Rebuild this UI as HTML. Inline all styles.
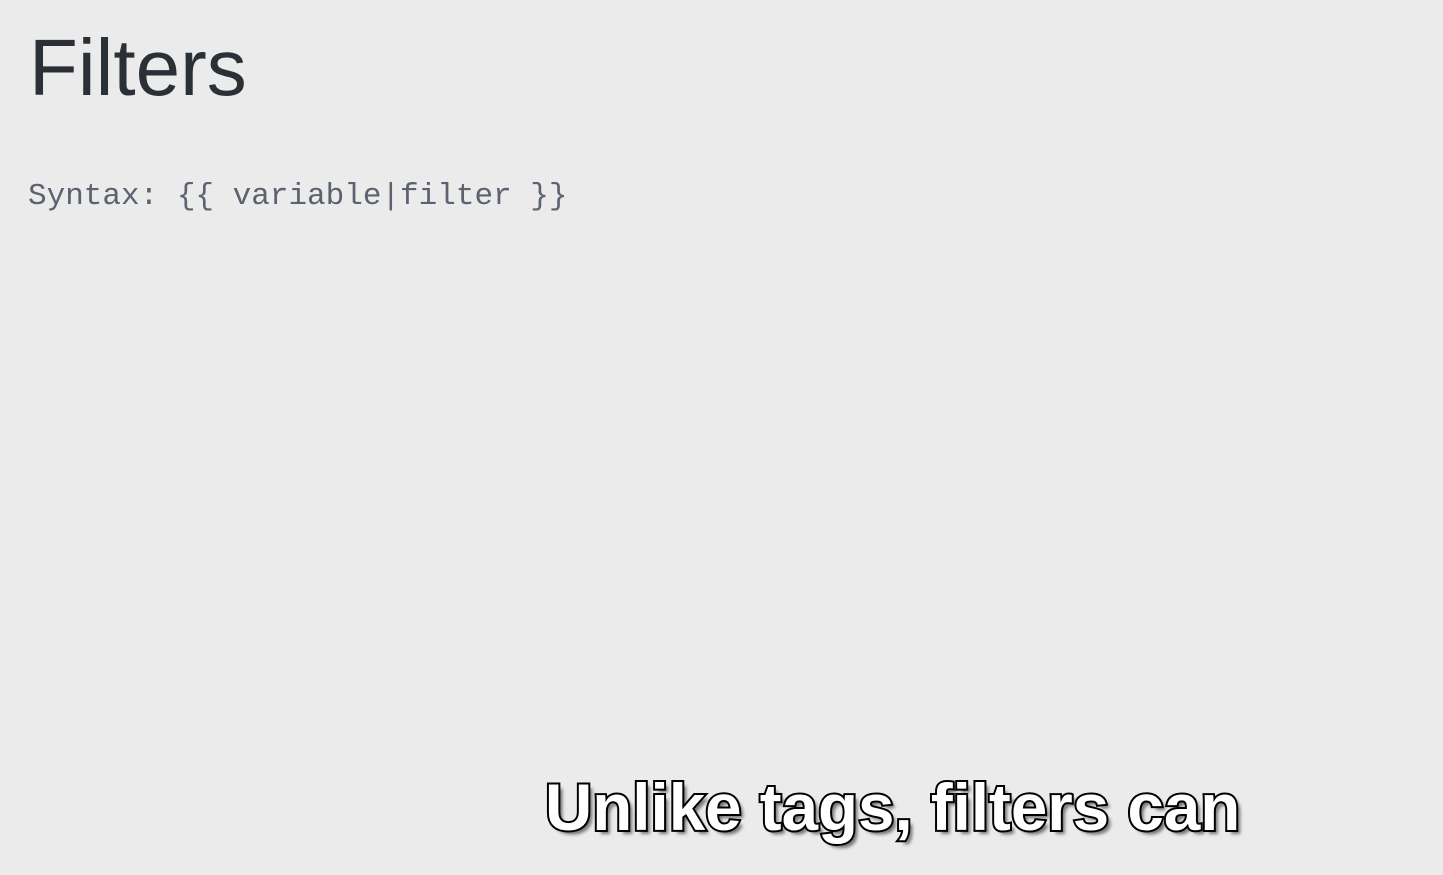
<!DOCTYPE html>
<html><head><meta charset="utf-8"><style>
html,body{margin:0;padding:0;width:1443px;height:875px;background:#ebebeb;overflow:hidden;position:relative}
.t{position:absolute;left:29px;top:28px;font:80px/1 "Liberation Sans",sans-serif;color:#2b2f36;white-space:nowrap}
.s{position:absolute;left:28px;top:181px;font:31px/1 "Liberation Mono",monospace;color:#5b6370;white-space:nowrap}
.c{position:absolute;left:545px;top:775px;font:bold 65.5px/1 "Liberation Sans",sans-serif;color:#fff;white-space:nowrap;
-webkit-text-stroke:4px #000;paint-order:stroke fill;text-shadow:4px 4px 3px rgba(0,0,0,.5)}
</style></head><body>
<div class="t">Filters</div>
<div class="s">Syntax: {{ variable|filter }}</div>
<div class="c">Unlike tags, filters can</div>
</body></html>
